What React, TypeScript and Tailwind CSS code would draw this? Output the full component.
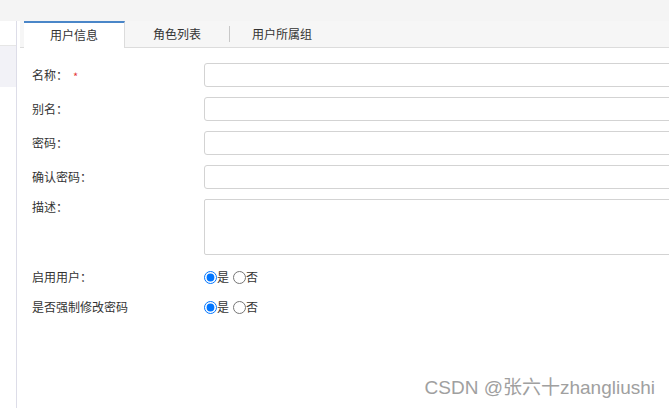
import React from "react";

const font = { fontFamily: '"Noto Sans CJK SC", "Liberation Sans", sans-serif' };

function Row({ label, required, children, top }: { label: string; required?: boolean; children: React.ReactNode; top?: boolean }) {
  return (
    <div className={`flex ${top ? "items-start" : "items-center"}`}>
      <div className="w-[172px] shrink-0 text-[12px] leading-[16px] text-[#333] flex items-start">
        <span>{label}</span>
        {required && <span className="ml-[5px] text-[#e4393c] text-[11px] leading-[16px] mt-[1px]">*</span>}
      </div>
      {children}
    </div>
  );
}

function Input() {
  return <div className="h-[24px] w-[520px] shrink-0 rounded-[3px] border border-[#d3d3d3] bg-white" />;
}

function Radios({ name }: { name: string }) {
  return (
    <div className="flex items-center text-[12px] leading-[16px] text-[#333]">
      <input type="radio" name={name} defaultChecked className="w-[13px] h-[13px] m-0" />
      <span>是</span>
      <input type="radio" name={name} className="w-[13px] h-[13px] m-0 ml-[4px]" />
      <span>否</span>
    </div>
  );
}

export default function App() {
  return (
    <div className="relative w-[669px] h-[408px] overflow-hidden bg-white" style={font}>
      <div className="h-[21px] bg-[#f4f4f4]" />
      <div className="flex h-[387px]">
        <div className="w-[17px] shrink-0 border-r border-[#dddde8]">
          <div className="h-[25px] border-b border-[#e6e6e6] bg-white" />
          <div className="h-[41px] bg-[#f2f2f7]" />
        </div>
        <div className="flex-1 pl-[3px] min-w-0">
          <div className="h-[27px] bg-[#f6f6f6] border-b border-[#dcdcdc] pl-[4px] flex items-stretch text-[12px] text-[#333]">
            <div className="w-[101px] -mb-[1px] bg-white border-t-2 border-[#4a86c8] border-r border-r-[#dcdcdc] flex items-center justify-center pb-[1px]">
              用户信息
            </div>
            <div className="w-[104px] flex items-center justify-center">角色列表</div>
            <div className="w-px my-[5px] bg-[#c8c8c8]" />
            <div className="w-[104px] flex items-center justify-center">用户所属组</div>
          </div>
          <div className="pl-[12px] pt-[15px] flex flex-col gap-[10px]">
            <Row label="名称：" required><Input /></Row>
            <Row label="别名："><Input /></Row>
            <Row label="密码："><Input /></Row>
            <Row label="确认密码："><Input /></Row>
            <Row label="描述：" top>
              <div className="h-[56px] w-[520px] shrink-0 rounded-[2px] border border-[#d3d3d3] bg-white" />
            </Row>
            <div className="flex flex-col gap-[10px] pt-[2px]">
              <div className="h-[20px] flex items-center">
                <Row label="启用用户："><Radios name="a" /></Row>
              </div>
              <div className="h-[20px] flex items-center">
                <Row label="是否强制修改密码"><Radios name="b" /></Row>
              </div>
            </div>
          </div>
        </div>
      </div>
      <div
        className="absolute right-[14px] bottom-[9px] text-[19px] leading-[22px] text-[#a0a0a0]"
        style={{ fontFamily: '"Liberation Sans", "Noto Sans CJK SC", sans-serif', textShadow: "0 0 1px #fff" }}
      >
        CSDN @张六十zhangliushi
      </div>
    </div>
  );
}
